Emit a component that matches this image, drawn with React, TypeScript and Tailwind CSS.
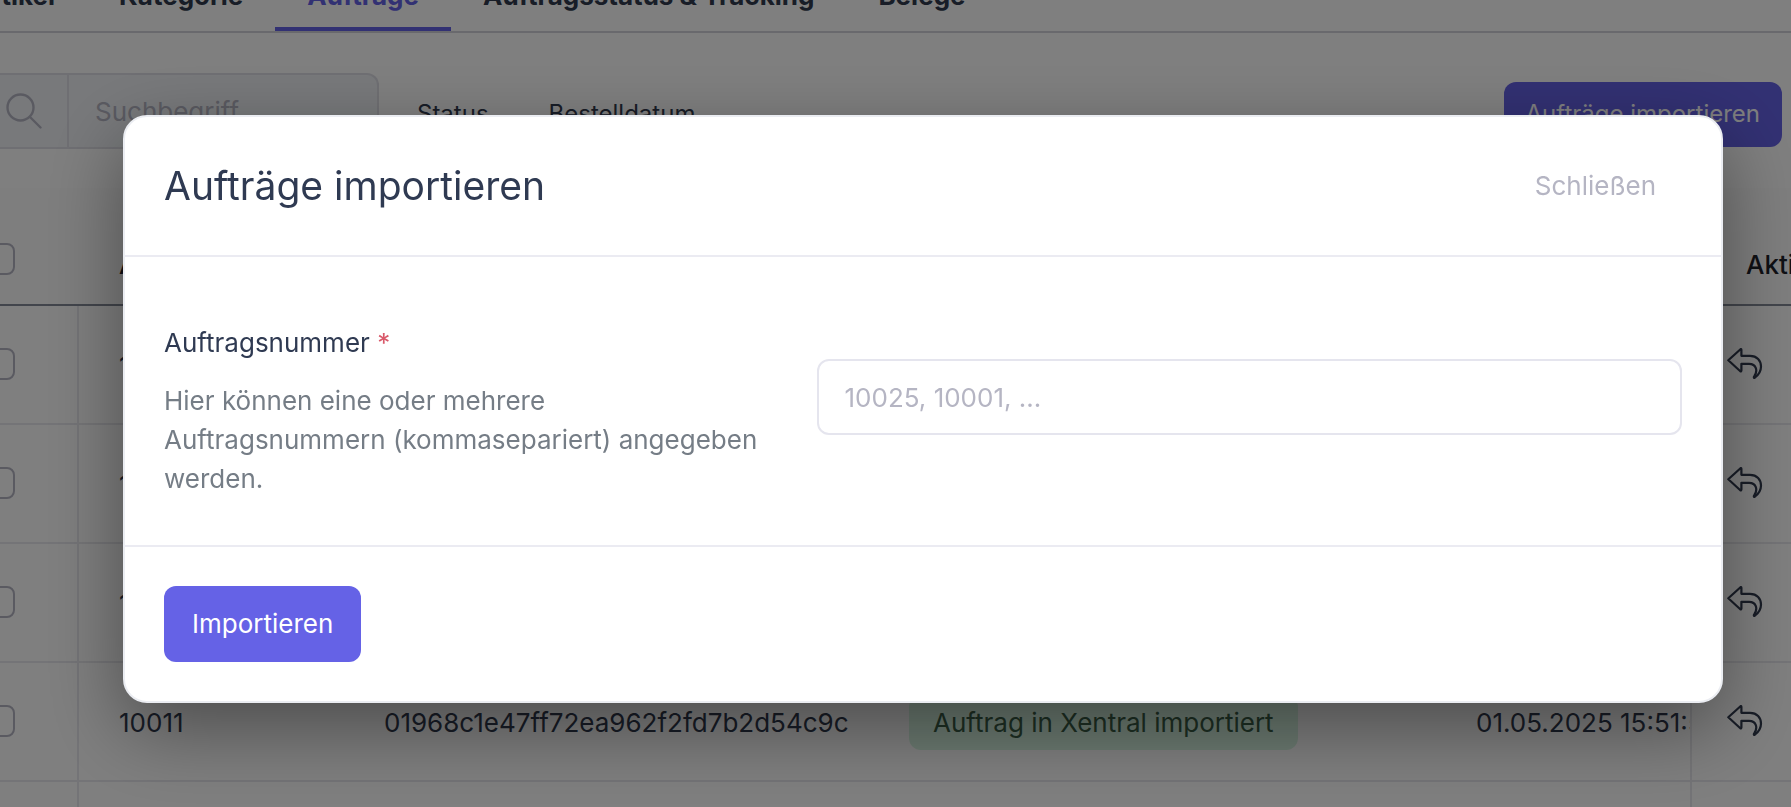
import React from "react";

type Order = {
  number: string;
  id: string;
  status: string;
  date: string;
};

const tabs = ["Artikel", "Kategorie", "Aufträge", "Auftragsstatus & Tracking", "Belege"];

const orders: Order[] = [
  { number: "10014", id: "", status: "", date: "" },
  { number: "10013", id: "", status: "", date: "" },
  { number: "10012", id: "", status: "", date: "" },
  {
    number: "10011",
    id: "01968c1e47ff72ea962f2fd7b2d54c9c",
    status: "Auftrag in Xentral importiert",
    date: "01.05.2025 15:51:53",
  },
  { number: "10010", id: "", status: "", date: "" },
];

function SearchIcon() {
  return (
    <svg width="36" height="36" viewBox="0 0 36 36" fill="none" stroke="currentColor" strokeWidth="2.4" strokeLinecap="round" aria-hidden="true">
      <circle cx="14.5" cy="14.5" r="13" />
      <path d="M24 24 34.5 34.5" />
    </svg>
  );
}

function ReplyIcon() {
  return (
    <svg width="36" height="32" viewBox="0 0 36 32" fill="none" stroke="currentColor" strokeWidth="2.2" strokeLinejoin="round" strokeLinecap="round" aria-hidden="true">
      <path d="M1.3 12.3 13.5 1.2Q14.4 .7 14.4 2V7.8H23C30 7.8 34 12.5 34 18.5 34 23.5 31.5 27 27.8 29.7 26.8 30.2 26.6 29.2 27.2 28.4 31 23 29.5 15.8 22 15.8H14.4V22.4Q14.3 23.8 13.3 23.2Z" />
    </svg>
  );
}

function Checkbox({ label }: { label: string }) {
  return (
    <input
      type="checkbox"
      aria-label={label}
      className="-ml-[17px] block size-8 appearance-none rounded-lg border-2 border-[#b5b5c3] bg-transparent"
    />
  );
}

function Tabs() {
  return (
    <nav className="-mt-6 -ml-[61px] flex border-b-2 border-[#d3d3da]">
      {tabs.map((tab) => (
        <a
          key={tab}
          href="#"
          className={
            tab === "Aufträge"
              ? "border-b-4 border-[#6562e6] px-8 pb-3 font-bold text-[#6562e6]"
              : "border-b-4 border-transparent px-8 pb-3 font-bold text-[#313a4e]"
          }
        >
          {tab}
        </a>
      ))}
    </nav>
  );
}

function Toolbar() {
  return (
    <div className="flex items-center pt-10 pr-[9px] pb-[39px]">
      <div className="flex h-[76px] w-[379px] shrink-0 overflow-hidden rounded-r-xl border-y-2 border-r-2 border-[#dfdfe6] bg-[#f0f3f7]">
        <span className="flex w-[69px] shrink-0 items-center border-r-2 border-[#dfdfe6] pl-1.5 text-[#b5b5c3]">
          <SearchIcon />
        </span>
        <input
          type="text"
          aria-label="Suchbegriff"
          placeholder="Suchbegriff"
          className="min-w-0 flex-1 bg-transparent px-[26px] placeholder:text-[#b5b5c3]"
        />
      </div>
      <button type="button" className="ml-[38px] pt-1.5 text-2xl text-[#313a4e]">Status</button>
      <button type="button" className="ml-[60px] pt-1.5 text-2xl text-[#313a4e]">Bestelldatum</button>
      <button type="button" className="mt-1.5 ml-auto h-[65px] rounded-xl bg-[#6562e6] px-[22px] text-2xl text-white">
        Aufträge importieren
      </button>
    </div>
  );
}

function OrdersTable() {
  return (
    <table className="w-full table-fixed border-separate border-spacing-0 text-left text-[#313a4e]">
      <colgroup>
        <col className="w-[79px]" />
        <col className="w-[265px]" />
        <col className="w-[525px]" />
        <col className="w-[567px]" />
        <col />
        <col className="w-[101px]" />
      </colgroup>
      <thead>
        <tr className="h-[118px] bg-[#fdfdfd] text-[#1e2129] [&>th]:border-b-2 [&>th]:border-[#858b98] [&>th]:pt-9 [&>th]:font-medium">
          <th><div className="-mt-2.5"><Checkbox label="Alle auswählen" /></div></th>
          <th className="pl-10">Auftragsnummer</th>
          <th className="pl-10">ID</th>
          <th className="pl-10">Status</th>
          <th className="pl-10">Datum</th>
          <th className="overflow-hidden pl-14">Aktionen</th>
        </tr>
      </thead>
      <tbody>
        {orders.map((order) => (
          <tr key={order.number} className="h-[119px] [&>td]:border-b-2 [&>td]:border-[#e9e9ee]">
            <td className="border-r-2 pb-0.5"><Checkbox label={`Auftrag ${order.number} auswählen`} /></td>
            <td className="pt-0.5 pl-10">{order.number}</td>
            <td className="pt-0.5 pl-10">{order.id}</td>
            <td className="pt-0.5 pl-10">
              {order.status && (
                <span className="inline-block rounded-xl bg-[#d8f6e3] px-6 py-2 text-[#3c6048]">{order.status}</span>
              )}
            </td>
            <td className="overflow-hidden pt-0.5 pl-10 whitespace-nowrap">{order.date}</td>
            <td className="border-l-2 pb-0.5 pl-[35px]">
              <button type="button" aria-label="Zurücksetzen" className="block">
                <ReplyIcon />
              </button>
            </td>
          </tr>
        ))}
      </tbody>
    </table>
  );
}

function ImportDialog() {
  return (
    <div className="fixed inset-0 bg-black/50 pt-[115px] pr-[68px] pl-[123px]">
      <form
        role="dialog"
        aria-modal="true"
        aria-labelledby="import-title"
        onSubmit={(event) => event.preventDefault()}
        className="rounded-3xl border-2 border-[#ebedf2] bg-white shadow-[0_26px_78px_rgba(0,0,0,0.4)]"
      >
        <header className="flex h-[140px] items-center justify-between border-b-2 border-[#ebebf2] px-[39px]">
          <h2 id="import-title" className="text-[39px] leading-[60px] text-[#2f3a52]">Aufträge importieren</h2>
          <button type="button" className="px-[26px] pb-0.5 text-[#b5b5c3]">Schließen</button>
        </header>
        <div className="grid grid-cols-12 gap-12 px-[39px] pt-[66px] pb-[47px]">
          <div className="col-span-5">
            <label htmlFor="order-number" className="block text-[#2f3a52]">
              Auftragsnummer <span className="text-[#d9596a]">*</span>
            </label>
            <p id="order-help" className="mt-[19px] text-[#757d86]">
              Hier können eine oder mehrere Auftragsnummern (kommasepariert) angegeben werden.
            </p>
          </div>
          <div className="col-span-7 pt-9">
            <input
              id="order-number"
              type="text"
              required
              aria-describedby="order-help"
              placeholder="10025, 10001, ..."
              className="block h-[76px] w-full rounded-xl border-2 border-[#e5e5ee] px-[26px] text-[#2f3a52] placeholder:text-[#b5b5c3]"
            />
          </div>
        </div>
        <footer className="border-t-2 border-[#ebebf2] p-[39px]">
          <button type="submit" className="h-[76px] rounded-xl bg-[#6562e6] px-7 pb-0.5 text-white">
            Importieren
          </button>
        </footer>
      </form>
    </div>
  );
}

export default function App() {
  return (
    <div className="h-screen overflow-hidden bg-white font-[Inter,sans-serif] text-[26px] leading-[39px]">
      <Tabs />
      <Toolbar />
      <OrdersTable />
      <ImportDialog />
    </div>
  );
}
